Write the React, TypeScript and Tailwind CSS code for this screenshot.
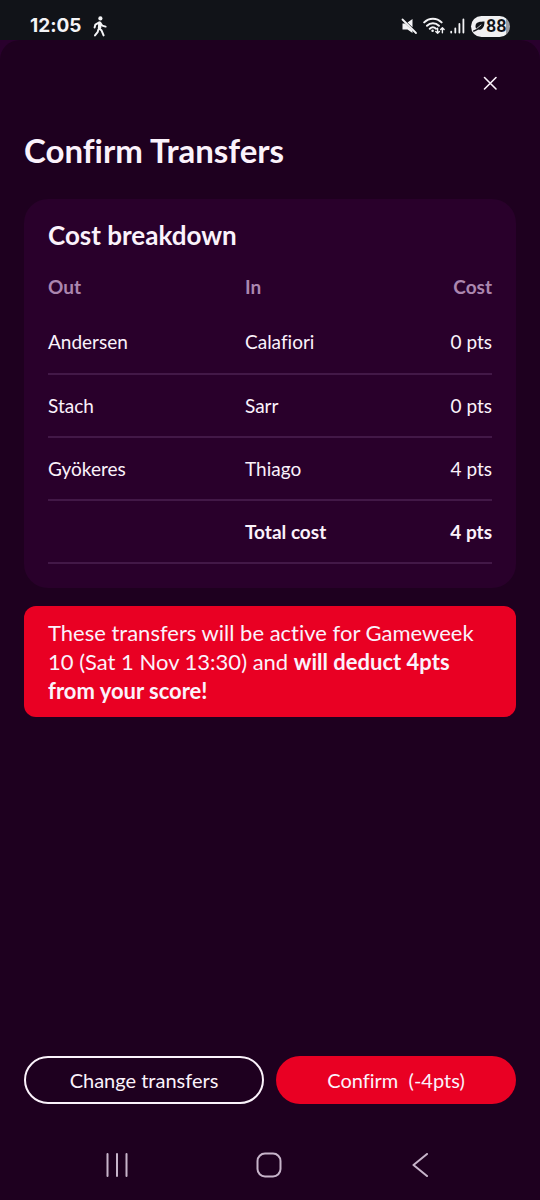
const transfers = [
  { out: "Andersen", in: "Calafiori", cost: "0 pts" },
  { out: "Stach", in: "Sarr", cost: "0 pts" },
  { out: "Gyökeres", in: "Thiago", cost: "4 pts" },
];

function WalkIcon() {
  return (
    <svg width="14" height="21" viewBox="0 0 14 21" fill="none" stroke="currentColor" strokeWidth="2" strokeLinecap="round" strokeLinejoin="round" aria-hidden>
      <circle cx="7.4" cy="2.4" r="2.1" fill="currentColor" stroke="none" />
      <path d="M6.6 6.5 5.8 12 8.6 14.6 10.6 19.4M5.4 13.5 4.6 16.2 2 19.4M5.8 6.6 2.4 8.6 1.6 11.6M7.2 6.8l2 2.8 3.4 1" />
      <path d="M6.8 7v4.6" strokeWidth="3" />
    </svg>
  );
}

function MuteIcon() {
  return (
    <svg width="17" height="17" viewBox="0 0 17 17" aria-hidden>
      <path d="M1.5 5.5H4l7.5 7V15L6.5 11.5h-5zM6.5 4.5l5-3.5v8.3z" fill="currentColor" />
      <path d="m1.5 1.5 13.5 13.5" stroke="currentColor" strokeWidth="1.8" strokeLinecap="round" />
    </svg>
  );
}

function WifiIcon() {
  return (
    <svg width="22" height="18" viewBox="0 0 22 18" fill="none" stroke="currentColor" strokeWidth="2" strokeLinecap="round" strokeLinejoin="round" aria-hidden>
      <path d="M1.2 5.4c4.8-5 12.6-5 17.4 0M4 8.7c3.3-3.2 8.6-3.2 11.9 0M6.8 11.7c1.8-1.7 4.4-1.7 6.2 0" />
      <circle cx="9.6" cy="13.8" r="1.3" fill="currentColor" stroke="none" />
      <path d="M14.6 11.2v5M12.8 14.5l1.8 1.8 1.8-1.8M19.4 15.8v-5M17.7 12.4l1.7-1.7 1.7 1.7" strokeWidth="1.4" />
    </svg>
  );
}

function SignalIcon() {
  return (
    <svg width="15" height="16" viewBox="0 0 15 16" stroke="currentColor" strokeWidth="1.8" strokeLinecap="round" aria-hidden>
      <path d="M1.2 13.6v.9M5.3 10.5v4M9.4 6v8.5M13.4 1.5v13" />
    </svg>
  );
}

function LeafIcon() {
  return (
    <svg width="12" height="11" viewBox="0 0 12 11" aria-hidden>
      <path d="M11.5.5c-4 .3-9-.2-9 4.8 0 1.4.6 2.5 1.4 3 4.6 1.7 7.6-1.3 7.600-7.800z" fill="currentColor" />
      <path d="M.8 10C2.5 9.6 5 8 7.6 4.500" fill="none" stroke="currentColor" strokeWidth="1.5" strokeLinecap="round" />
      <path d="M3.6 7.6 8 4" stroke="#f0f0f2" strokeWidth=".8" strokeLinecap="round" />
    </svg>
  );
}

function StatusBar() {
  return (
    <header className="flex h-10 items-end justify-between bg-[#111318] px-[30px] pb-0.5 text-[#f4f4f6]">
      <div className="flex items-center gap-3">
        <span className="font-['Inter',sans-serif] text-[19px] leading-6 font-bold">12:05</span>
        <WalkIcon />
      </div>
      <div className="flex h-6 items-center gap-1.5">
        <div className="flex items-center gap-[5px]">
          <MuteIcon />
          <WifiIcon />
          <SignalIcon />
        </div>
        <div className="flex h-[21px] w-[39px] items-center gap-px rounded-full bg-[linear-gradient(90deg,#f0f0f2_90%,#9a9b9f_90%)] pl-[2px] text-[#111318]">
          <LeafIcon />
          <span className="font-['Roboto',sans-serif] text-[18px] leading-5 font-semibold">88</span>
        </div>
      </div>
    </header>
  );
}

function NavBar() {
  return (
    <nav className="flex h-[70px] items-center justify-between pr-[108px] pl-[105px] text-[#c7b4ca]">
      <button type="button" aria-label="Recent apps">
        <svg width="24" height="24" viewBox="0 0 24 24" stroke="currentColor" strokeWidth="2" strokeLinecap="round">
          <path d="M2.5 1v22M12 1v22M21.5 1v22" />
        </svg>
      </button>
      <button type="button" aria-label="Home">
        <svg width="26" height="26" viewBox="0 0 26 26" fill="none" stroke="currentColor" strokeWidth="2">
          <rect x="1.5" y="1.5" width="23" height="23" rx="7.5" />
        </svg>
      </button>
      <button type="button" aria-label="Back">
        <svg width="24" height="24" viewBox="0 0 24 24" fill="none" stroke="currentColor" strokeWidth="2" strokeLinecap="round" strokeLinejoin="round">
          <path d="M19 1 5.5 12 19 23" />
        </svg>
      </button>
    </nav>
  );
}

export default function App() {
  return (
    <div className="flex min-h-screen flex-col bg-[#29002d] font-['Lato',sans-serif] text-[#fbf2fb] [font-variant-ligatures:none]">
      <StatusBar />
      <main className="flex grow flex-col rounded-t-[20px] bg-[#1e001f]">
        <div className="flex justify-end px-10 pt-8">
          <button type="button" aria-label="Close">
            <svg width="20" height="22" viewBox="0 0 20 22" stroke="currentColor" strokeWidth="1.6" strokeLinecap="round">
              <path d="m4.5 5.5 11.500 11.500M16 5.5 4.5 17" />
            </svg>
          </button>
        </div>

        <div className="px-6">
          <h1 className="mt-9 text-[33px] leading-10 font-bold">Confirm Transfers</h1>

          <section className="mt-[29px] rounded-3xl bg-[#29002b] px-6 pt-4 pb-6">
            <h2 className="text-[26px] leading-10 font-bold">Cost breakdown</h2>
            <table className="mt-2 w-full table-fixed text-left text-[19px] leading-7">
              <thead className="text-[#ab86af]">
                <tr className="h-12">
                  <th className="w-[197px] font-bold">Out</th>
                  <th className="font-bold">In</th>
                  <th className="w-1/4 text-right font-bold">Cost</th>
                </tr>
              </thead>
              <tbody>
                {transfers.map((transfer) => (
                  <tr key={transfer.out} className="h-[63px] border-b-2 border-[#421847]">
                    <td>{transfer.out}</td>
                    <td>{transfer.in}</td>
                    <td className="text-right">{transfer.cost}</td>
                  </tr>
                ))}
              </tbody>
              <tfoot>
                <tr className="h-[63px] border-b-2 border-[#421847] font-bold">
                  <td />
                  <td>Total cost</td>
                  <td className="text-right">4 pts</td>
                </tr>
              </tfoot>
            </table>
          </section>

          <p className="mt-[18px] rounded-xl bg-[#e90023] px-6 py-3 text-[22px] leading-[29px]">
            These transfers will be active for Gameweek 10 (Sat 1 Nov 13:30) and{" "}
            <strong className="font-bold">will deduct 4pts from your score!</strong>
          </p>
        </div>

        <div className="mt-auto grid grid-cols-2 gap-3 px-6 pb-[26px] text-[20px]">
          <button type="button" className="h-12 rounded-full border-2 border-[#fbf2fb]">
            Change transfers
          </button>
          <button type="button" className="h-12 rounded-full bg-[#e90023] whitespace-pre">
            {"Confirm  (-4pts)"}
          </button>
        </div>
        <NavBar />
      </main>
    </div>
  );
}
